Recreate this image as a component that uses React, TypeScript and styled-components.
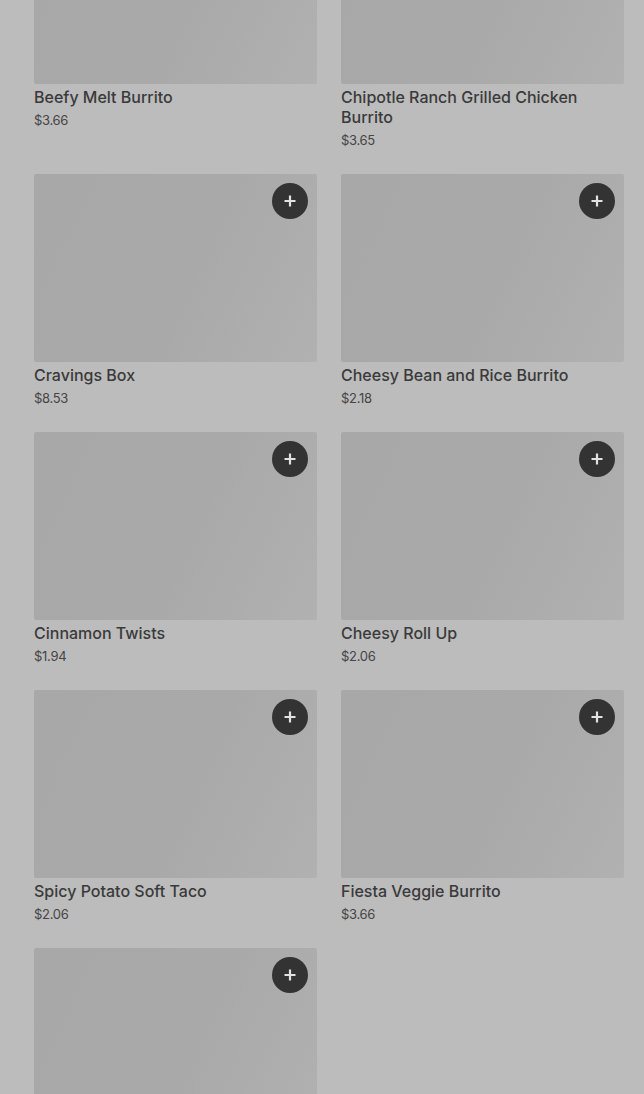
import styled, { createGlobalStyle } from "styled-components";

const GlobalStyle = createGlobalStyle`
  html, body {
    margin: 0;
    padding: 0;
    background: #bcbcbc;
    overflow: hidden;
  }
  body {
    font-family: Inter, Roboto, "Liberation Sans", sans-serif;
  }
`;

const Page = styled.div`
  height: 1094px;
  overflow: hidden;
`;

const Grid = styled.ul`
  list-style: none;
  margin: -104px 0 0;
  padding: 0 20px 0 34px;
  display: grid;
  grid-template-columns: 1fr 1fr;
  column-gap: 24px;
  row-gap: 25px;
`;

const Card = styled.li`
  display: flex;
  flex-direction: column;
`;

const Thumb = styled.div`
  position: relative;
  height: 188px;
  border-radius: 2px;
  background: linear-gradient(115deg, #a8a8a8 0%, #a9a9a9 55%, #b1b1b1 100%);
`;

const AddButton = styled.button`
  position: absolute;
  top: 9px;
  right: 9px;
  width: 36px;
  height: 36px;
  border: none;
  border-radius: 50%;
  background: #333333;
  color: #e2e2e2;
  display: flex;
  align-items: center;
  justify-content: center;
  padding: 0;
  cursor: pointer;
`;

const Title = styled.h3`
  margin: 3px 0 0;
  font-size: 16px;
  line-height: 20px;
  font-weight: 500;
  color: #3a3a3a;
`;

const Price = styled.p`
  margin: 4px 0 0;
  font-size: 13px;
  line-height: 18px;
  letter-spacing: -0.3px;
  color: #454545;
`;

const items = [
  { name: "Beefy Melt Burrito", price: "$3.66" },
  { name: "Chipotle Ranch Grilled Chicken Burrito", price: "$3.65" },
  { name: "Cravings Box", price: "$8.53" },
  { name: "Cheesy Bean and Rice Burrito", price: "$2.18" },
  { name: "Cinnamon Twists", price: "$1.94" },
  { name: "Cheesy Roll Up", price: "$2.06" },
  { name: "Spicy Potato Soft Taco", price: "$2.06" },
  { name: "Fiesta Veggie Burrito", price: "$3.66" },
  { name: "Nacho Fries", price: "$1.89" },
];

function PlusIcon() {
  return (
    <svg width="14" height="14" viewBox="0 0 14 14" fill="none">
      <path d="M7 1.5v11M1.5 7h11" stroke="currentColor" strokeWidth="2.2" />
    </svg>
  );
}

export default function App() {
  return (
    <Page>
      <GlobalStyle />
      <Grid>
        {items.map((item) => (
          <Card key={item.name}>
            <Thumb>
              <AddButton aria-label={`Add ${item.name}`}>
                <PlusIcon />
              </AddButton>
            </Thumb>
            <Title>{item.name}</Title>
            <Price>{item.price}</Price>
          </Card>
        ))}
      </Grid>
    </Page>
  );
}
